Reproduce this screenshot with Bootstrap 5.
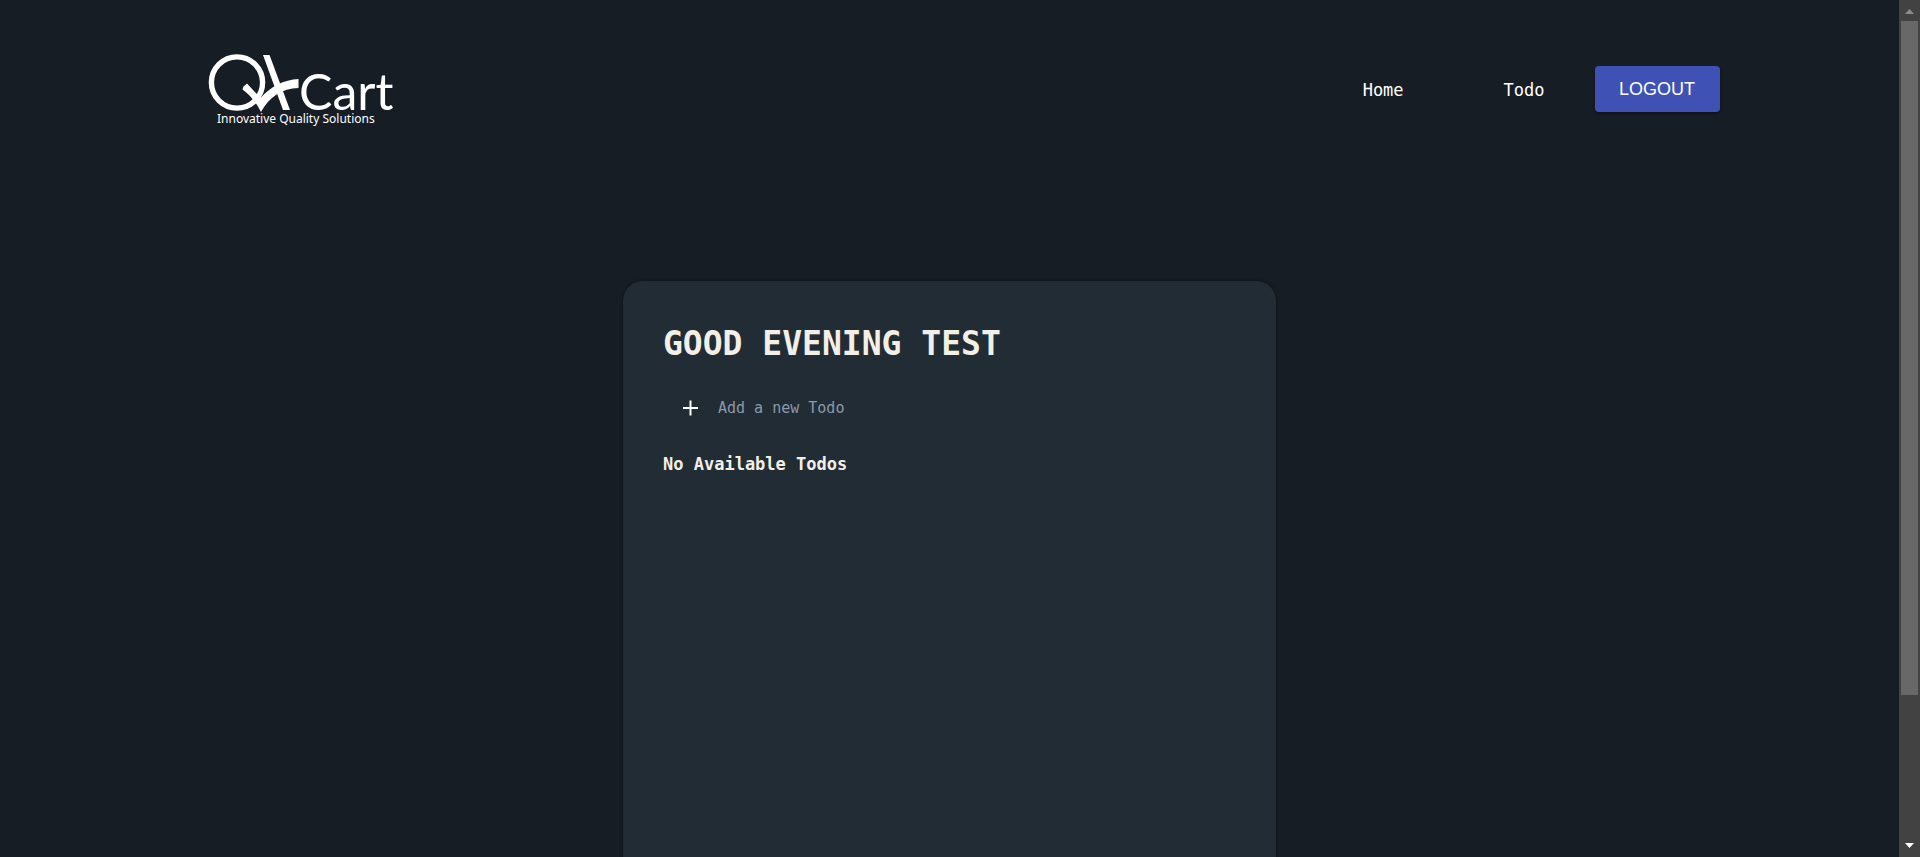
<!DOCTYPE html>
<html lang="en">
<head>
<meta charset="utf-8">
<meta name="viewport" content="width=device-width, initial-scale=1">
<title>QxCart Todo</title>
<link href="https://cdn.jsdelivr.net/npm/bootstrap@5.3.0/dist/css/bootstrap.min.css" rel="stylesheet">
<style>
body { background: #171d25; color: #f2efe6; font-family: "DejaVu Sans Mono", monospace; font-size: 17px; line-height: 24px; }
.site-header { padding: 45px 9.45% 0 10.55%; }
.site-link { color: #fff; text-decoration: none; padding: 2px 50px 0; }
.btn-logout { --bs-btn-color: #fff; --bs-btn-bg: #3f51b5; --bs-btn-hover-color: #fff; --bs-btn-hover-bg: #303f9f; --bs-btn-border-width: 0; --bs-btn-padding-x: 22px; --bs-btn-padding-y: 11px; --bs-btn-border-radius: 4px;
  --bs-btn-font-family: "Liberation Sans", sans-serif; --bs-btn-font-size: 18px; line-height: 24px; width: 125px; box-shadow: 0 2px 3px rgba(0,0,0,.35); }
.todo-panel { background: #222c35; width: 653px; max-width: 100%; min-height: 100vh; margin-top: 148px; padding: 40px; border-radius: 20px; box-shadow: 0 0 3px rgba(0,0,0,.5); }
.greeting { font-size: 33px; line-height: 46px; margin-bottom: 27px; }
.add-row { margin-bottom: 30px; }
.add-input, .add-input:focus { background: transparent; border: 0; box-shadow: none; color: #f2efe6; font-size: 15px; line-height: 24px; padding: 0; }
.add-input::placeholder { color: #8b99a9; opacity: 1; }
.add-btn { width: 55px; padding: 0 0 0 18px; border: 0; background: none; line-height: 0; }
.scroll-rail { width: 21px; background: #424242; }
.scroll-thumb { width: 17px; height: 78.7%; background: #686868; }
</style>
</head>
<body class="d-flex vh-100 overflow-hidden">
<div class="flex-grow-1 d-flex flex-column overflow-hidden">
  <header class="site-header d-flex justify-content-between align-items-center flex-shrink-0">
    <a href="#" aria-label="QxCart home">
      <svg class="d-block" width="200" height="88" viewBox="0 0 200 88" fill="#fff">
        <circle cx="37" cy="37.5" r="25.6" fill="none" stroke="#fff" stroke-width="5.4"/>
        <path d="M63 10H69.5L90 65H83Z"/>
        <path d="M42.5 44.5L43.5 41.5L47 38.5L60.5 53C70 42 84 34.5 98.5 34V43C82 43.5 69 52 61 67C56 57 50 50 42.5 44.5Z"/>
        <text x="99" y="65" font-family="Lato, sans-serif" font-size="50">Cart</text>
        <text x="17" y="78" font-family="Noto Sans, sans-serif" font-size="12">Innovative Quality Solutions</text>
      </svg>
    </a>
    <nav class="d-flex align-items-center" aria-label="Main">
      <a class="site-link" href="#">Home</a>
      <a class="site-link" href="#">Todo</a>
      <button type="button" class="btn btn-logout">LOGOUT</button>
    </nav>
  </header>
  <main class="todo-panel mx-auto flex-shrink-0">
    <h1 class="greeting fw-bold">GOOD EVENING TEST</h1>
    <form class="add-row d-flex align-items-center">
      <button type="button" class="add-btn text-start flex-shrink-0" aria-label="Add">
        <svg width="20" height="28" viewBox="0 0 20 28" stroke="#fff" stroke-width="2"><path d="M2 14H17M9.5 6.5V21.5"/></svg>
      </button>
      <input class="form-control add-input" type="text" placeholder="Add a new Todo" aria-label="Add a new Todo">
    </form>
    <p class="fw-bold m-0">No Available Todos</p>
  </main>
</div>
<div class="scroll-rail flex-shrink-0 d-flex flex-column align-items-center" aria-hidden="true">
  <svg class="flex-shrink-0" width="21" height="21"><path d="M6 14L10.5 9L15 14Z" fill="#8a8a8a"/></svg>
  <div class="scroll-thumb"></div>
  <svg class="mt-auto flex-shrink-0" width="21" height="21"><path d="M6 7H15L10.5 12Z" fill="#fff"/></svg>
</div>
<script src="https://cdn.jsdelivr.net/npm/bootstrap@5.3.0/dist/js/bootstrap.bundle.min.js"></script>
</body>
</html>
